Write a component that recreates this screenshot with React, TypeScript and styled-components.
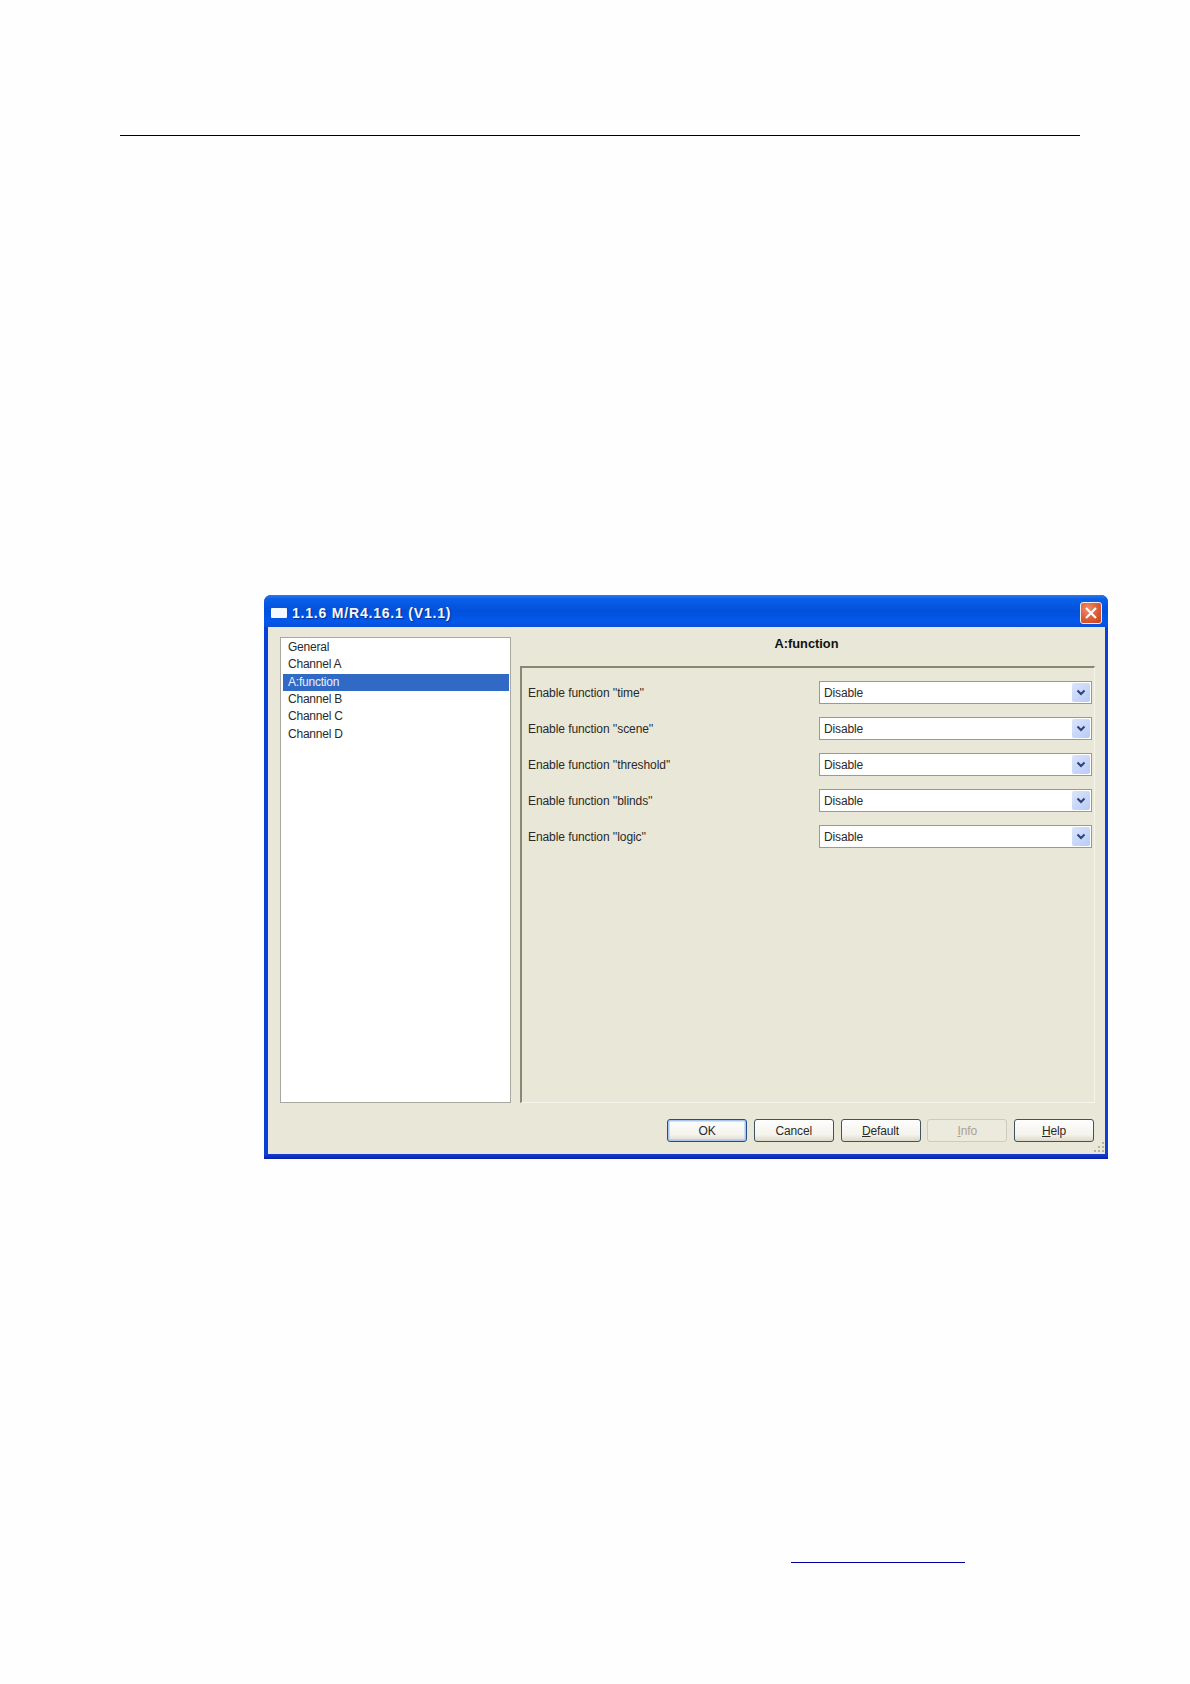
import React from "react";
import styled, { createGlobalStyle } from "styled-components";

const Global = createGlobalStyle`
  html, body { margin: 0; padding: 0; background: #fefefe; }
  body { font-family: "Liberation Sans", Arial, sans-serif; }
`;

const Page = styled.div`
  width: 1190px;
  height: 1684px;
  padding-top: 135px;
  box-sizing: border-box;
  overflow: hidden;
`;

const HeaderRule = styled.div`
  margin-left: 120px;
  width: 960px;
  height: 1px;
  background: #000;
`;

const Dialog = styled.div`
  margin: 459px 0 0 264px;
  width: 844px;
  height: 564px;
  display: flex;
  flex-direction: column;
  border-radius: 7px 7px 0 0;
  overflow: hidden;
  background: #0a3fd8;
`;

const TitleBar = styled.div`
  height: 32px;
  flex: none;
  display: flex;
  align-items: center;
  padding: 3px 6px 0 7px;
  box-sizing: border-box;
  background: linear-gradient(180deg, #2a7cec 0%, #0a5fe8 12%, #0050dc 50%, #0358ea 82%, #0a4fd8 100%);
`;

const WindowIcon = styled.div`
  width: 16px;
  height: 10px;
  background: #f4f8ff;
  border-radius: 1px;
  margin-right: 5px;
`;

const TitleText = styled.div`
  flex: 1;
  color: #f4f7ff;
  font-weight: 700;
  font-size: 14px;
  letter-spacing: 0.8px;
  text-shadow: 1px 1px 1px #0a2a90;
`;

const CloseButton = styled.div`
  width: 22px;
  height: 22px;
  margin-top: 1px;
  box-sizing: border-box;
  border: 1px solid #f0f0f0;
  border-radius: 3px;
  background: radial-gradient(circle at 35% 30%, #ee8f6c 0%, #dc5a34 55%, #c4401e 100%);
  display: flex;
  align-items: center;
  justify-content: center;
`;

const Frame = styled.div`
  flex: 1;
  margin: 0 3px 5px 4px;
  background: #e9e7d8;
  display: flex;
  flex-direction: column;
  position: relative;
`;

const FrameBottomEdge = styled.div`
  height: 5px;
  margin-top: -5px;
  background: linear-gradient(180deg, #1340d8, #0a1fa8);
  flex: none;
`;

const Main = styled.div`
  display: flex;
  align-items: flex-start;
  padding-left: 12px;
  gap: 9px;
`;

const List = styled.div`
  width: 231px;
  height: 466px;
  margin-top: 10px;
  box-sizing: border-box;
  background: #fff;
  border: 1px solid #a8a8a0;
  padding: 1px 1px 0 2px;
`;

const ListItem = styled.div<{ $selected?: boolean }>`
  height: 17.33px;
  line-height: 16.5px;
  padding-left: 5px;
  font-size: 12px;
  letter-spacing: -0.22px;
  color: ${(p) => (p.$selected ? "#e8eefc" : "#2a2a2a")};
  background: ${(p) => (p.$selected ? "#316ac5" : "transparent")};
`;

const Panel = styled.div`
  width: 575px;
  display: flex;
  flex-direction: column;
`;

const PanelTitle = styled.div`
  height: 39px;
  box-sizing: border-box;
  padding-top: 9px;
  padding-right: 2px;
  text-align: center;
  font-size: 12.8px;
  font-weight: 700;
  color: #111;
`;

const PanelBox = styled.div`
  height: 437px;
  box-sizing: border-box;
  border-top: 2px solid #8a8772;
  border-left: 2px solid #8a8772;
  border-right: 1px solid #f6f5ec;
  border-bottom: 1px solid #f6f5ec;
  padding: 13px 2px 0 6px;
  display: flex;
  flex-direction: column;
  gap: 13px;
`;

const Row = styled.div`
  height: 23px;
  display: flex;
  align-items: center;
  justify-content: space-between;
`;

const RowLabel = styled.div`
  font-size: 12px;
  letter-spacing: -0.08px;
  color: #2a2a2a;
`;

const Select = styled.div`
  width: 273px;
  height: 23px;
  box-sizing: border-box;
  background: #fff;
  border: 1px solid #9a9a90;
  display: flex;
  align-items: center;
  justify-content: space-between;
  padding: 1px 1px 1px 4px;
  font-size: 12px;
  letter-spacing: -0.15px;
  color: #2a2a2a;
`;

const SelectArrow = styled.div`
  width: 18px;
  align-self: stretch;
  background: linear-gradient(135deg, #dbe5fb, #b8cbf6);
  border-radius: 2px;
  display: flex;
  align-items: center;
  justify-content: center;
`;

const Footer = styled.div`
  display: flex;
  justify-content: flex-end;
  gap: 6.75px;
  padding: 16px 11px 0 0;
`;

const Button = styled.div<{ $primary?: boolean; $disabled?: boolean }>`
  width: 80px;
  height: 23px;
  box-sizing: border-box;
  border-radius: 3px;
  border: 1px solid ${(p) => (p.$disabled ? "#cdcbbc" : p.$primary ? "#1f4f8f" : "#3f5360")};
  box-shadow: ${(p) => (p.$primary ? "inset 0 0 0 1.5px #a9c4ee" : "none")};
  background: ${(p) =>
    p.$disabled ? "#eceadc" : "linear-gradient(180deg, #fefefe 0%, #f4f3ec 70%, #dcd9cb 100%)"};
  color: ${(p) => (p.$disabled ? "#a5a396" : "#2a2a2a")};
  font-size: 12px;
  letter-spacing: -0.15px;
  display: flex;
  align-items: center;
  justify-content: center;
`;

const Grip = styled.svg`
  position: absolute;
  right: 0;
  bottom: 1px;
`;

const LinkRule = styled.div`
  margin: 403px 0 0 791px;
  width: 174px;
  height: 1px;
  background: #0000a0;
`;

const Chevron = () => (
  <svg width="10" height="8" viewBox="0 0 10 8">
    <path d="M1.5 1.5 L5 5 L8.5 1.5" fill="none" stroke="#2c4378" strokeWidth="2" />
  </svg>
);

const items = ["General", "Channel A", "A:function", "Channel B", "Channel C", "Channel D"];
const rows = ["time", "scene", "threshold", "blinds", "logic"];

export default function App() {
  return (
    <Page>
      <Global />
      <HeaderRule />
      <Dialog>
        <TitleBar>
          <WindowIcon />
          <TitleText>1.1.6 M/R4.16.1 (V1.1)</TitleText>
          <CloseButton>
            <svg width="14" height="14" viewBox="0 0 14 14">
              <path d="M2 2 L12 12 M12 2 L2 12" stroke="#fff" strokeWidth="2.2" />
            </svg>
          </CloseButton>
        </TitleBar>
        <Frame>
          <Main>
            <List>
              {items.map((it) => (
                <ListItem key={it} $selected={it === "A:function"}>
                  {it}
                </ListItem>
              ))}
            </List>
            <Panel>
              <PanelTitle>A:function</PanelTitle>
              <PanelBox>
                {rows.map((r) => (
                  <Row key={r}>
                    <RowLabel>Enable function ''{r}''</RowLabel>
                    <Select>
                      Disable
                      <SelectArrow>
                        <Chevron />
                      </SelectArrow>
                    </Select>
                  </Row>
                ))}
              </PanelBox>
            </Panel>
          </Main>
          <Footer>
            <Button $primary>OK</Button>
            <Button>Cancel</Button>
            <Button>
              <span>
                <u>D</u>efault
              </span>
            </Button>
            <Button $disabled>
              <span>
                <u>I</u>nfo
              </span>
            </Button>
            <Button>
              <span>
                <u>H</u>elp
              </span>
            </Button>
          </Footer>
          <Grip width="12" height="12" viewBox="0 0 12 12">
            <g fill="#b5b2a2">
              <rect x="9" y="1" width="2" height="2" />
              <rect x="5" y="5" width="2" height="2" />
              <rect x="9" y="5" width="2" height="2" />
              <rect x="1" y="9" width="2" height="2" />
              <rect x="5" y="9" width="2" height="2" />
              <rect x="9" y="9" width="2" height="2" />
            </g>
          </Grip>
        </Frame>
        <FrameBottomEdge />
      </Dialog>
      <LinkRule />
    </Page>
  );
}
